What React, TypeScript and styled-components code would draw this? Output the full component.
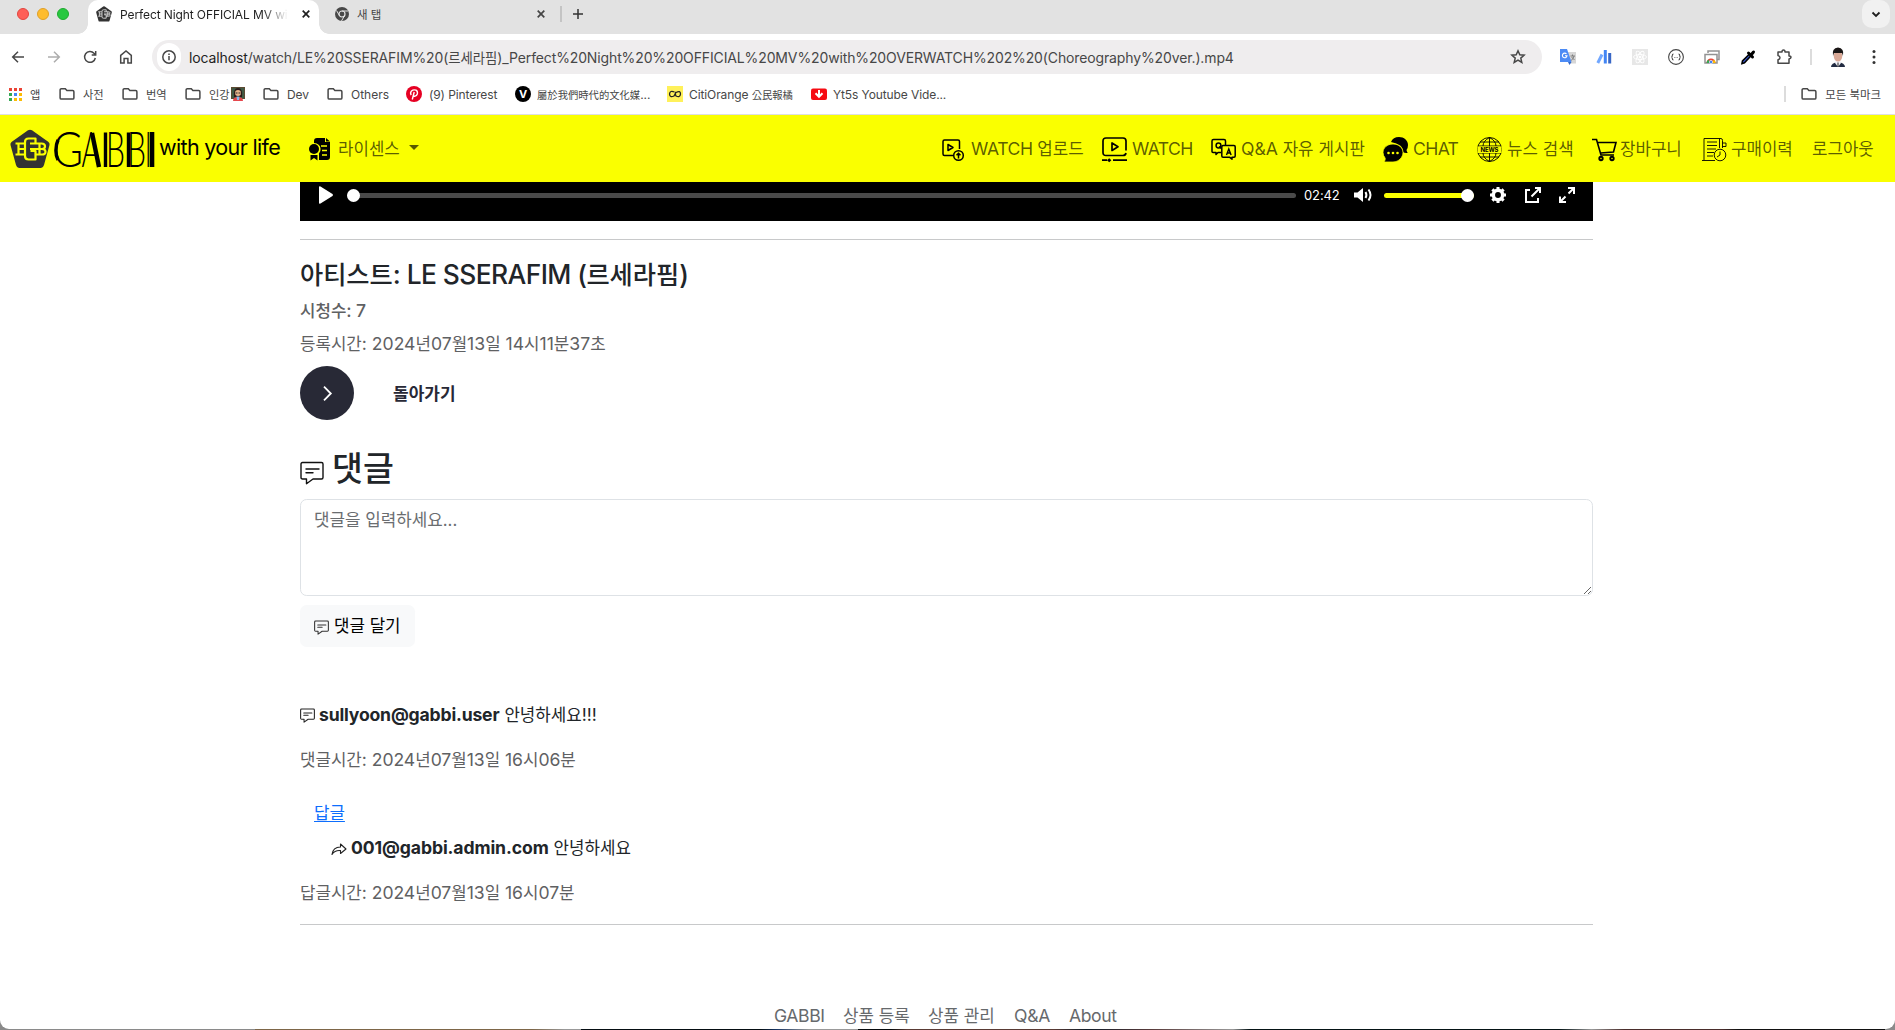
import React from "react";
import styled, { createGlobalStyle } from "styled-components";

const GlobalStyle = createGlobalStyle`
  * { box-sizing: border-box; }
  body {
    margin: 0;
    background: #fff;
    font-family: Inter, "Noto Sans CJK KR", sans-serif;
    font-size: 17.6px;
    color: #212529;
    overflow: hidden;
  }
`;

const Window = styled.div`
  width: 1895px;
  height: 1030px;
  display: flex;
  flex-direction: column;
  background: #8a8a8a;
  overflow: hidden;
`;

const Page = styled.div`
  height: 1029px;
  flex: none;
  display: flex;
  flex-direction: column;
  background: #fff;
  border-radius: 0 0 9px 9px;
  overflow: hidden;
`;

const DesktopEdge = styled.div`
  height: 1px;
  flex: none;
  margin: 0 10px 0 255px;
  background: linear-gradient(90deg, #7d6648 0 17%, #999 19% 20%, #050d12 20% 31%, #173564 32%, #999 34% 37%, #05090c 37% 39%, #593a34 40% 49%, #101c28 51%, #593b3b 55%, #999 60%, #041315 61% 80%, #999 82%, #4a2d2b 84% 90%, #111 91%);
`;

const Glyph = styled.svg.attrs<{ $w?: number; $h?: number }>((p) => ({
  fill: "none",
  stroke: p.stroke ?? "currentColor",
  strokeWidth: p.strokeWidth ?? 1.5,
}))<{ $w?: number; $h?: number }>`
  display: block;
  flex: none;
  width: ${(p) => p.$w ?? 16}px;
  height: ${(p) => p.$h ?? p.$w ?? 16}px;
  overflow: visible;
`;

/* ---------- text ---------- */

const Hangul = styled.span<{ $k: number }>`
  font-size: ${(p) => p.$k}em;
  letter-spacing: 0;
`;

const Label = styled.span<{ $w?: number; $ls?: number }>`
  display: block;
  flex: none;
  width: ${(p) => (p.$w ? `${p.$w}px` : "auto")};
  letter-spacing: ${(p) => p.$ls ?? 0}px;
  white-space: nowrap;
`;

function Mixed({ children, k = 0.955 }: { children: string; k?: number }) {
  return (
    <>
      {children.split(/([\uac00-\ud7a3\u4e00-\u9fff]+)/).map((part, i) =>
        i % 2 ? <Hangul key={i} $k={k}>{part}</Hangul> : part
      )}
    </>
  );
}

/* ---------- tab strip ---------- */

const TabStrip = styled.div`
  height: 34px;
  flex: none;
  display: flex;
  background: #e2e2e2;
  font-size: 12px;
`;

const Lights = styled.div`
  width: 88px;
  height: 28px;
  flex: none;
  display: flex;
  align-items: center;
  gap: 8px;
  padding-left: 17px;
`;

const Light = styled.i<{ $c: string; $b: string }>`
  width: 12px;
  height: 12px;
  border-radius: 50%;
  background: ${(p) => p.$c};
  border: 1px solid ${(p) => p.$b};
`;

const Tab = styled.div<{ $active?: boolean; $w: number }>`
  position: relative;
  width: ${(p) => p.$w}px;
  height: 34px;
  flex: none;
  display: flex;
  align-items: center;
  padding: 0 ${(p) => (p.$active ? 11 : 14)}px 6px 8px;
  color: ${(p) => (p.$active ? "#1f1f1f" : "#454545")};
  background: ${(p) => (p.$active ? "#fff" : "transparent")};
  border-radius: 10px 10px 0 0;
  ${(p) => p.$active && `
    &::before, &::after {
      content: "";
      position: absolute;
      bottom: 0;
      width: 10px;
      height: 10px;
    }
    &::before { left: -10px; background: radial-gradient(circle at 0 0, transparent 9.5px, #fff 10px); }
    &::after { right: -10px; background: radial-gradient(circle at 100% 0, transparent 9.5px, #fff 10px); }
  `}
`;

const TabTitle = styled.span<{ $fade?: boolean }>`
  flex: 1;
  margin: 0 14px 0 8px;
  white-space: nowrap;
  letter-spacing: -0.1px;
  ${(p) => p.$fade && "mask-image: linear-gradient(90deg, #000 85%, transparent);"}
`;

const Divider = styled.i<{ $h: number; $m: string; $c?: string }>`
  width: 2px;
  height: ${(p) => p.$h}px;
  margin: ${(p) => p.$m};
  background: ${(p) => p.$c ?? "#dcdcdc"};
  flex: none;
`;

const TabSearch = styled.div`
  width: 28px;
  height: 28px;
  margin: 0 5px 0 auto;
  border-radius: 10px;
  background: #f1f1f1;
  display: flex;
  align-items: center;
  justify-content: center;
  color: #1f1f1f;
`;

/* ---------- toolbar ---------- */

const Toolbar = styled.div`
  height: 46px;
  flex: none;
  display: flex;
  align-items: center;
  padding: 0 13px 0 10px;
  color: #474747;
`;

const NavButtons = styled.div`
  display: flex;
  gap: 20px;
  width: 142px;
`;

const Omnibox = styled.div`
  width: 1390px;
  height: 34px;
  display: flex;
  align-items: center;
  padding: 0 16px 0 5px;
  border-radius: 17px;
  background: #efedee;
  font-size: 14px;
`;

const InfoCircle = styled.span`
  width: 24px;
  height: 28px;
  border-radius: 14px;
  background: #fff;
  display: flex;
  align-items: center;
  justify-content: center;
  margin-right: 8px;
`;

const Url = styled.span`
  flex: 1;
  letter-spacing: -0.128px;
  color: #474747;
  white-space: nowrap;
  b { font-weight: 400; color: #1f1f1f; }
`;

const Extensions = styled.div`
  display: flex;
  align-items: center;
  gap: 20px;
  margin-left: 18px;
`;

/* ---------- bookmarks ---------- */

const Bookmarks = styled.div`
  height: 34px;
  flex: none;
  display: flex;
  align-items: center;
  padding: 0 14px 6px 9px;
  font-size: 12px;
  color: #474747;
`;

const Bookmark = styled.div<{ $w: number; $gap?: number }>`
  width: ${(p) => p.$w}px;
  flex: none;
  display: flex;
  align-items: center;
  gap: ${(p) => p.$gap ?? 8}px;
`;

const AllBookmarks = styled.div`
  margin-left: auto;
  display: flex;
  align-items: center;
  gap: 8px;
`;

const BrowserLine = styled.div`
  height: 1px;
  flex: none;
  background: #dedfe3;
`;

/* ---------- site navbar ---------- */

const Navbar = styled.nav`
  height: 67px;
  flex: none;
  display: flex;
  align-items: center;
  padding: 0 21px 0 10px;
  background: #faff00;
  color: rgba(0, 0, 0, 0.65);
`;

const Brand = styled.div`
  display: flex;
  align-items: center;
  width: 299px;
  color: #000;
  font-size: 22px;
`;

const Wordmark = styled.span`
  margin: 3px 0 0 4px;
`;

const BrandText = styled.span`
  margin: 0 0 3px 4px;
  font-size: 21.5px;
  letter-spacing: -0.65px;
  white-space: nowrap;
`;

const NavItem = styled.a<{ $gap: number; $ml?: number }>`
  display: flex;
  align-items: center;
  gap: ${(p) => p.$gap}px;
  margin-left: ${(p) => p.$ml ?? 0}px;
  svg { color: #000; margin-top: 2px; }
`;

const NavText = styled(Label)`
  margin-top: -1px;
`;

const Caret = styled.i`
  border: 5px solid transparent;
  border-top-color: rgba(0, 0, 0, 0.65);
  border-bottom: 0;
  margin: -2px 0 0 2px;
`;

const NavRight = styled.div`
  display: flex;
  margin-left: auto;
`;

/* ---------- content ---------- */

const Content = styled.main`
  width: 1293px;
  margin-left: 300px;
  display: flex;
  flex-direction: column;
`;

const Player = styled.div`
  height: 39px;
  flex: none;
  display: flex;
  align-items: center;
  padding: 0 18px 13px 19px;
  background: #000;
  color: #fff;
`;

const Track = styled.div<{ $w: number; $ml: number; $c: string; $end?: boolean }>`
  width: ${(p) => p.$w}px;
  height: 5px;
  margin-left: ${(p) => p.$ml}px;
  display: flex;
  align-items: center;
  justify-content: ${(p) => (p.$end ? "flex-end" : "flex-start")};
  border-radius: 3px;
  background: ${(p) => p.$c};
`;

const Knob = styled.i`
  width: 13px;
  height: 13px;
  flex: none;
  border-radius: 50%;
  background: #fff;
`;

const Time = styled.span`
  width: 50px;
  margin-left: 8px;
  font-size: 13px;
  letter-spacing: -0.1px;
`;

const PlayerIcons = styled.div`
  margin-left: auto;
  display: flex;
  gap: 18.5px;
`;

const Rule = styled.hr`
  width: 100%;
  height: 1px;
  flex: none;
  margin: 18px 0 0;
  border: 0;
  background: #c8c9ca;
`;

const Line = styled.div<{ $mt?: number; $pl?: number; $h?: number }>`
  height: ${(p) => p.$h ?? 28}px;
  flex: none;
  display: flex;
  align-items: center;
  margin-top: ${(p) => p.$mt ?? 0}px;
  padding-left: ${(p) => p.$pl ?? 0}px;
  white-space: pre;
  svg { color: #222; margin-top: 3px; margin-right: 4px; }
`;

const Title = styled.h4`
  height: 40px;
  margin: 14px 0 0;
  line-height: 40px;
  font-size: 26.4px;
  font-weight: 500;
  letter-spacing: -0.58px;
`;

const Meta = styled(Line)<{ $bold?: boolean }>`
  color: #5f6163;
  font-weight: ${(p) => (p.$bold ? 500 : 400)};
`;

const BackButton = styled.button`
  display: flex;
  align-items: center;
  gap: 39px;
  height: 54px;
  margin: 6px 0 0;
  padding: 0;
  border: 0;
  background: none;
  font: 700 17px Inter, "Noto Sans CJK KR", sans-serif;
  color: #282936;
`;

const BackText = styled.span`
  margin-top: -2px;
`;

const BackCircle = styled.span`
  width: 54px;
  height: 54px;
  border-radius: 50%;
  background: #282936;
  color: #fff;
  display: flex;
  align-items: center;
  justify-content: center;
`;

const Heading = styled.h2`
  height: 58px;
  margin: 20px 0 0;
  display: flex;
  align-items: center;
  gap: 8px;
  font-size: 33.6px;
  line-height: 58px;
  font-weight: 500;
  svg { margin-top: 8px; color: #111; }
`;

const Field = styled.textarea`
  width: 100%;
  height: 97px;
  flex: none;
  margin: 1px 0 0;
  padding: 7px 13px;
  border: 1px solid #dee2e6;
  border-radius: 6.6px;
  resize: vertical;
  font: 16.85px/26px Inter, "Noto Sans CJK KR", sans-serif;
  &::placeholder { color: #6a6d70; opacity: 1; }
`;

const Submit = styled.button`
  width: 115px;
  height: 42px;
  flex: none;
  display: flex;
  align-items: center;
  gap: 5px;
  margin: 9px 0 0;
  padding: 0 0 2px 14px;
  border: 0;
  border-radius: 6.6px;
  background: #f8f9fa;
  color: #000;
  font: 16.8px Inter, "Noto Sans CJK KR", sans-serif;
  white-space: nowrap;
  svg { margin-top: 5px; color: #333; }
`;

const Author = styled.b<{ $ls: number }>`
  font-weight: 700;
  margin-right: 5px;
  letter-spacing: ${(p) => p.$ls}px;
`;

const ReplyLink = styled.a`
  color: #0d6efd;
  text-decoration: underline;
  text-underline-offset: 2px;
`;

const Footer = styled.footer`
  height: 28px;
  flex: none;
  display: flex;
  align-items: center;
  margin-top: 76px;
  padding-left: 474px;
  color: #66696c;
`;

/* ---------- drawings ---------- */

const Folder = () => (
  <Glyph $w={16} viewBox="0 0 16 16">
    <path d="M2.3 2.8h4l1.6 1.7h5.8c.7 0 1.2.5 1.2 1.2v6.2c0 .7-.5 1.2-1.2 1.2H2.3c-.7 0-1.2-.5-1.2-1.2V4c0-.7.5-1.2 1.2-1.2z" />
  </Glyph>
);

const Pentagon = ({ size, ink, bg }: { size: number; ink: string; bg: string }) => (
  <Glyph $w={size} viewBox="0 0 40 40">
    <path d="M18 1.3q2-1.2 4 0L38.5 13q1.5 1.3 1 3L34 36q-.8 3-3 3H9q-2.2 0-3-3L.5 16q-.5-1.700 1-3z" fill={ink} stroke="none" />
    <g stroke={bg} strokeWidth="2.200" strokeLinejoin="round">
      <path d="M25.500 14.500V9.500H18.500q-3.500 0-3.500 3.500v14q0 3.500 3.500 3.500h7v-8.500h-5" />
      <path d="M14.500 14.500H5.500M14.500 25.500H5.500M8.500 14.500v11M8.500 20H15" />
      <path d="M20 14.500h11.500q3.500 0 3.500 2.700T32 20q3.500 0 3.500 2.800t-3.500 2.700H25M29.500 14.500v11M20 20h12" />
    </g>
  </Glyph>
);

const GabbiWordmark = () => (
  <Glyph $w={101} $h={36} viewBox="0 0 101 36" aria-label="GABBI">
    <g fill="#000" stroke="none" fontFamily="Lato, sans-serif" fontWeight="300" fontSize="48.500">
      <text transform="translate(-1.500 35) scale(.86 1)">G</text>
      <text transform="translate(27.500 35) scale(.6 1)">A</text>
      <text transform="translate(52 35) scale(.62 1)">B</text>
      <text transform="translate(73 35) scale(.62 1)">B</text>
      <text transform="translate(91 35) scale(.5 1)">I</text>
    </g>
    <g stroke="#000" strokeWidth="3.400">
      <path d="M4 8C1.200 14 1.200 23 4 28" strokeWidth="3.400" />
      <path d="M38 1L45 35" strokeWidth="4.400" />
      <path d="M51.500.5V35M74.500.5V35" />
      <path d="M98 0v35" strokeWidth="4.600" />
    </g>
  </Glyph>
);

const Bubble = ({ size }: { size: number }) => (
  <Glyph $w={size} viewBox="0 0 24 24" strokeWidth={size > 20 ? 1.4 : 1.7}>
    <path d="M2.500 1.500h19q1.500 0 1.500 1.500v13.500q0 1.500-1.500 1.500H13l-6.500 4.700V18h-4Q1 18 1 16.500V3q0-1.500 1.500-1.500zM6 8h13M6 11.700h7" strokeLinejoin="round" strokeLinecap="round" />
  </Glyph>
);

const Cross = () => (
  <Glyph $w={8} viewBox="0 0 8 8"><path d="M.7.7l6.600 6.600M7.300.7L.7 7.300" strokeWidth="1.700" /></Glyph>
);

const License = () => (
  <Glyph $w={22} $h={23} viewBox="0 0 22 23">
    <path d="M5 5V3q0-3 3-3h8v4h5v15q0 3-3 3h-8v-6.500q2-2 1.500-5Q11 5.500 5 5z" fill="currentColor" stroke="none" />
    <path d="M17 0l4 3.500h-4z" fill="currentColor" stroke="none" />
    <circle cx="5" cy="11" r="5" fill="currentColor" stroke="none" />
    <path d="M1.500 17v5.500L5 20l3.500 2.500V17z" fill="currentColor" stroke="none" />
    <path d="M12 8h6M13 12.500h5M13 17h5" stroke="#faff00" strokeWidth="1.500" />
  </Glyph>
);

const Upload = () => (
  <Glyph $w={22} viewBox="0 0 22 22">
    <path d="M11 16.500H2.500Q1 16.500 1 15V2.500Q1 1 2.500 1H16q1.500 0 1.500 1.500V10M6 5.500v6l5-3z" strokeLinejoin="round" />
    <circle cx="16.500" cy="16.500" r="4.800" />
    <path d="M16.500 19.500v-5M14.500 16.300l2-2 2 2" />
  </Glyph>
);

const WatchIcon = () => (
  <Glyph $w={25} viewBox="0 0 25 25">
    <path d="M21 18.500H4Q1 18.500 1 15.500V4q0-3 3-3h17q3 0 3 3v9.500M24 16q-.5 2.500-3 2.500M10 6v7.500l6-3.700zM0 23.200h5M11 23.200h14" strokeLinejoin="round" strokeWidth="1.700" />
    <path d="M5 23.200l2.200-2 2.200 2-2.200 2z" fill="currentColor" stroke="none" />
  </Glyph>
);

const QnaIcon = () => (
  <Glyph $w={25} viewBox="0 0 25 25">
    <path d="M10 15.500H7l-2 2v-2H2Q1 15.500 1 14.500V4q0-1.500 1.500-1.500H13q1.500 0 1.500 1.500v4M12 8.500h11q1.200 0 1.200 1.200V19q0 1.200-1.200 1.200h-2v2l-2.500-2H12q-1.200 0-1.200-1.200V9.700q0-1.200 1.200-1.200z" strokeLinejoin="round" />
    <circle cx="7.500" cy="8.500" r="2.400" />
    <path d="M8 9.500l2 2M15.500 18l2.300-6 2.300 6M16.300 16h3" strokeWidth="1.400" />
  </Glyph>
);

const ChatIcon = () => (
  <Glyph $w={25} viewBox="0 0 25 25">
    <path d="M8 5Q10 0 16 0c5 0 9 3.500 9 8q0 3-1.500 5 .3 1.500 1.200 3-3 .3-4.500-.7Q20 7 8 5z" fill="currentColor" stroke="none" />
    <path d="M10 7c6 0 10 4 10 8.500S16 25 10 25H1q1.500-2 1.200-3.800Q0 18.500 0 15.500C0 11 4 7 10 7z" fill="currentColor" stroke="#faff00" strokeWidth="0.800" />
    <g fill="#faff00" stroke="none"><circle cx="5.500" cy="16" r="1.300" /><circle cx="10" cy="16" r="1.300" /><circle cx="14.500" cy="16" r="1.300" /></g>
  </Glyph>
);

const NewsIcon = () => (
  <Glyph $w={25} viewBox="0 0 25 25" strokeWidth="0.900">
    <circle cx="12.500" cy="12.500" r="12" />
    <path d="M12.500.5v24M12.500.5Q6 4 6 9M12.500.5Q19 4 19 9M6 16q0 5 6.500 8.500Q19 21 19 16M3 5h19M1 9h23M1 16h23M3 20h19" />
    <path d="M.5 9.500h24v6.500H.5z" fill="#faff00" stroke="none" />
    <text x="12.500" y="15" textAnchor="middle" textLength="18" fontSize="6" fontWeight="700" fill="currentColor" stroke="none">NEWS</text>
  </Glyph>
);

const CartIcon = () => (
  <Glyph $w={25} viewBox="0 0 25 25" strokeWidth="1.600">
    <path d="M0 2.500h4.500L9 18h13M5.500 5.500H24L21.500 15 8.500 16" />
    <circle cx="9" cy="21.500" r="1.700" strokeWidth="1.900" /><circle cx="20" cy="21.500" r="1.700" strokeWidth="1.900" />
  </Glyph>
);

const ReceiptIcon = () => (
  <Glyph $w={24} $h={25} viewBox="0 0 24 25" strokeWidth="0.900">
    <path d="M2 23V1.500h17q1.500 0 1.500 2V11M0 23.500h13M17.500 1.500V11M20.500 6H24v3.500h-3.500M5 5h10M5 8.500h10M5 12h9M5 15.500h7M5 19h6" />
    <circle cx="18" cy="18" r="5.800" /><path d="M18 14.500V18l-3 2" />
  </Glyph>
);

const ShareArrow = () => (
  <Glyph $w={16} viewBox="0 0 16 16" strokeWidth="1.100">
    <path d="M1 13.500Q2 6 9.500 6V3L15 8l-5.500 4.500V9.600Q4 9 1 13.500z" strokeLinejoin="round" />
  </Glyph>
);

const Items: { icon: React.ReactNode; text: string; gap: number; w: number; ml: number; ls?: number }[] = [
  { icon: <Upload />, text: "WATCH 업로드", gap: 7, w: 112, ml: 0, ls: -0.4 },
  { icon: <WatchIcon />, text: "WATCH", gap: 5, w: 61, ml: 19, ls: -0.6 },
  { icon: <QnaIcon />, text: "Q&A 자유 게시판", gap: 5, w: 124, ml: 18, ls: -0.05 },
  { icon: <ChatIcon />, text: "CHAT", gap: 5, w: 46, ml: 18, ls: -0.65 },
  { icon: <NewsIcon />, text: "뉴스 검색", gap: 5, w: 67, ml: 18 },
  { icon: <CartIcon />, text: "장바구니", gap: 3, w: 62, ml: 18 },
  { icon: <ReceiptIcon />, text: "구매이력", gap: 5, w: 62, ml: 20 },
];

export default function App() {
  return (
    <Window>
      <GlobalStyle />
      <Page>
        <TabStrip>
          <Lights>
            <Light $c="#fe5f57" $b="#e2463f" /><Light $c="#febc2e" $b="#e0a028" /><Light $c="#28c840" $b="#1fab2f" />
          </Lights>
          <Tab $active $w={231}>
            <Pentagon size={16} ink="#333" bg="#ddd" />
            <TabTitle $fade>Perfect Night OFFICIAL MV wi</TabTitle>
            <Cross />
          </Tab>
          <Tab $w={240}>
            <Glyph $w={14} viewBox="0 0 14 14" style={{ marginLeft: 8 }}>
              <circle cx="7" cy="7" r="7" fill="#474747" stroke="none" />
              <circle cx="7" cy="7" r="3" stroke="#e2e2e2" strokeWidth="1.200" />
              <path d="M7 4h6M4.400 8.500L1.500 3.500M9.600 8.500L6.500 14" stroke="#e2e2e2" strokeWidth="1" />
            </Glyph>
            <TabTitle><Mixed>새 탭</Mixed></TabTitle>
            <Cross />
          </Tab>
          <Divider $h={16} $m="6px 11px 0 1px" $c="#c4c4c4" />
          <Glyph $w={10} viewBox="0 0 10 10" style={{ marginTop: 9 }}><path d="M5 0v10M0 5h10" stroke="#333" /></Glyph>
          <TabSearch>
            <Glyph $w={8} $h={5} viewBox="0 0 8 5"><path d="M.5.5L4 4 7.500.5" strokeWidth="1.800" /></Glyph>
          </TabSearch>
        </TabStrip>

        <Toolbar>
          <NavButtons>
            <Glyph viewBox="0 0 16 16"><path d="M14 8H3M8 2.700L2.700 8 8 13.300" /></Glyph>
            <Glyph viewBox="0 0 16 16" opacity="0.450"><path d="M2 8h11M8 2.700L13.300 8 8 13.300" /></Glyph>
            <Glyph viewBox="0 0 16 16"><path d="M13.300 9A5.400 5.400 0 1 1 12 4.300l1.500 1.500M13.700 2v4h-4" /></Glyph>
            <Glyph viewBox="0 0 16 16"><path d="M2.700 6.300L8 2l5.300 4.300V14H9.900V9.500H6.100V14H2.700z" /></Glyph>
          </NavButtons>
          <Omnibox>
            <InfoCircle>
              <Glyph $w={14} viewBox="0 0 14 14"><circle cx="7" cy="7" r="6.200" /><path d="M7 6v4.300M7 3.500v1.500" /></Glyph>
            </InfoCircle>
            <Url>
              <b>localhost</b>
              <Mixed>/watch/LE%20SSERAFIM%20(르세라핌)_Perfect%20Night%20%20OFFICIAL%20MV%20with%20OVERWATCH%202%20(Choreography%20ver.).mp4</Mixed>
            </Url>
            <Glyph viewBox="0 0 16 16"><path d="M8 1.800l1.800 4 4.300.4-3.300 2.900 1 4.300L8 11.200l-3.800 2.200 1-4.300L1.900 6.200l4.300-.4z" /></Glyph>
          </Omnibox>
          <Extensions>
            <Glyph viewBox="0 0 16 16" stroke="none">
              <path d="M6 3h10v11.500H9z" fill="#d6d6d6" /><path d="M0 0h7l4.500 13H0z" fill="#4c8bf5" /><path d="M8 13h3.500L9.500 16z" fill="#3367c8" />
              <path d="M6.500 5A2.300 2.300 0 1 0 7 6.700H5" stroke="#fff" strokeWidth="1.100" />
              <path d="M10.500 7h4.500M12.500 5.500V7M14 7q-.5 3-3 4.500M11.500 8l3 3" stroke="#777" strokeWidth="0.900" />
            </Glyph>
            <Glyph viewBox="0 0 16 16" strokeWidth="3"><path d="M1.800 14L6 5.500" stroke="#71a7ff" /><path d="M9.300 1v13.500" stroke="#4285f4" /><path d="M13.700 4v10.500" stroke="#3867c6" /></Glyph>
            <Glyph viewBox="0 0 16 16" strokeWidth="0.900">
              <path d="M0 0h16v16H0z" fill="#e7e7e7" stroke="none" />
              <g stroke="#fff"><ellipse cx="8" cy="8" rx="6.500" ry="2.500" /><ellipse cx="8" cy="8" rx="6.500" ry="2.500" transform="rotate(60 8 8)" /><ellipse cx="8" cy="8" rx="6.500" ry="2.500" transform="rotate(120 8 8)" /><circle cx="8" cy="8" r="1" fill="#fff" /></g>
            </Glyph>
            <Glyph viewBox="0 0 16 16" strokeWidth="1.100"><circle cx="8" cy="8" r="7.400" /><path d="M5.500 5Q4.300 5 4.300 6.500 4.300 8 3.300 8q1 0 1 1.500T5.500 11M10.500 5q1.200 0 1.200 1.500 0 1.500 1 1.500-1 0-1 1.500T10.500 11M6.500 8.500h.8M8.700 8.500h.8" /></Glyph>
            <Glyph viewBox="0 0 16 16">
              <path d="M4 4V2h11v8.500h-2M1 5.500h12V14H1z" stroke="#929292" />
              <path d="M2.500 14a4.500 4.500 0 0 1 9 0z" fill="#ea4335" stroke="none" /><path d="M2.500 14q0-2.500 2-3.600L6 14z" fill="#34a853" stroke="none" /><path d="M11.500 14q0-2-1.500-3.400L8 14z" fill="#fbbc04" stroke="none" /><circle cx="7" cy="13" r="1.700" fill="#4285f4" stroke="#fff" strokeWidth="0.600" />
            </Glyph>
            <Glyph viewBox="0 0 16 16"><path d="M9.500 5L2.500 12 2 14.500l2.500-.8 6.500-7" fill="#3c5de0" stroke="#000" strokeWidth="1.600" /><path d="M8.500 4l4 4M11 6l2.500-3" stroke="#000" strokeWidth="3" strokeLinecap="round" /></Glyph>
            <Glyph viewBox="0 0 16 16"><path d="M2 3h4q0-2 1.500-2T9 3h4v4q2 0 2 1.300T13 10v4.200H2v-3.400q2-.3 2-2T2 6.500z" strokeLinejoin="round" /></Glyph>
          </Extensions>
          <Divider $h={16} $m="0 18px 0 18px" />
          <Glyph $w={16} $h={20} viewBox="0 0 16 20">
            <path d="M1 20q0-4 7-5 7 1 7 5z" fill="#222b42" stroke="none" /><path d="M6 13h4l1 3-3 4-3-4z" fill="#f4f4fa" stroke="none" />
            <ellipse cx="8" cy="9" rx="4.300" ry="5.500" fill="#d9a896" stroke="none" /><path d="M3 9Q1.500 1 8 .5 14.500 1 13 9l-1-3H4z" fill="#191515" stroke="none" /><path d="M8 15.500V20" stroke="#222" strokeWidth="1" />
          </Glyph>
          <Glyph $w={16} viewBox="0 0 16 16" style={{ marginLeft: "auto" }}>
            <g fill="#333" stroke="none"><circle cx="8" cy="2.500" r="1.500" /><circle cx="8" cy="8" r="1.500" /><circle cx="8" cy="13.500" r="1.500" /></g>
          </Glyph>
        </Toolbar>

        <Bookmarks>
          <Bookmark $w={50}>
            <Glyph $w={13} viewBox="0 0 13 13">
              {["#ea4335", "#ea4335", "#ea4335", "#34a853", "#4285f4", "#fbbc04", "#34a853", "#fbbc04", "#fbbc04"].map((c, i) => (
                <rect key={i} x={(i % 3) * 5} y={Math.floor(i / 3) * 5} width="3" height="3" fill={c} stroke="none" />
              ))}
            </Glyph>
            <Label><Mixed k={0.94}>앱</Mixed></Label>
          </Bookmark>
          <Bookmark $w={63}><Folder /><Label><Mixed k={0.94}>사전</Mixed></Label></Bookmark>
          <Bookmark $w={63}><Folder /><Label><Mixed k={0.94}>번역</Mixed></Label></Bookmark>
          <Bookmark $w={78}>
            <Folder />
            <Bookmark $w={36} $gap={1}>
              <Label><Mixed k={0.94}>인강</Mixed></Label>
              <Glyph $w={14} viewBox="0 0 14 14">
                <path d="M0 0h14v12H0z" fill="#5c4a32" stroke="none" /><path d="M1 1h12v10H1z" fill="#3f5a44" stroke="none" />
                <path d="M3 10Q2 1 7 1t4 9z" fill="#2b1a18" stroke="none" /><circle cx="7" cy="6" r="3" fill="#e8b48c" stroke="none" /><path d="M2 14q0-4 5-4t5 4z" fill="#e5484d" stroke="none" /><path d="M5.500 9.500h3L8 13H6z" fill="#87b9ea" stroke="none" />
                <path d="M4.500 6h2M7.500 6h2" stroke="#222" strokeWidth="1" />
              </Glyph>
            </Bookmark>
          </Bookmark>
          <Bookmark $w={64}><Folder /><Label $ls={-0.1}>Dev</Label></Bookmark>
          <Bookmark $w={79}><Folder /><Label>Others</Label></Bookmark>
          <Bookmark $w={109} $gap={7}>
            <Glyph viewBox="0 0 16 16">
              <circle cx="8" cy="8" r="8" fill="#e60023" stroke="none" />
              <path d="M6.300 13.500L8.200 6M5.200 9Q3.800 6.800 5.500 5 7.500 3.200 10 4.200q2 1.200 1.300 3.800-.8 2.300-2.500 2.300-1.100 0-1.400-1" stroke="#fff" strokeWidth="1.400" />
            </Glyph>
            <Label $ls={-0.1}>(9) Pinterest</Label>
          </Bookmark>
          <Bookmark $w={152} $gap={6}>
            <Glyph viewBox="0 0 16 16"><circle cx="8" cy="8" r="8" fill="#000" stroke="none" /><text x="8" y="12" textAnchor="middle" fontSize="11" fontWeight="700" fill="#fff" stroke="none">V</text></Glyph>
            <Label><Mixed k={0.86}>屬於我們時代的文化媒...</Mixed></Label>
          </Bookmark>
          <Bookmark $w={144} $gap={6}>
            <Glyph viewBox="0 0 16 16"><path d="M0 0h16v16H0z" fill="#fff15a" stroke="none" /><path d="M7.500 6Q3 4 2.500 8q.3 4 4.500 2l2-3.500Q13.500 4 13.500 8q-.5 4-4.500 2Q7.500 7 9 6" stroke="#222" strokeWidth="1.300" /></Glyph>
            <Label $ls={-0.1}><Mixed k={0.86}>CitiOrange 公民報橘</Mixed></Label>
          </Bookmark>
          <Bookmark $w={140} $gap={6}>
            <Glyph viewBox="0 0 16 16"><path d="M2 2.500h12q2 0 2 2v7.500q0 2-2 2H2q-2 0-2-2V4.500q0-2 2-2z" fill="#f60b12" stroke="none" /><path d="M8 4v6M4.500 7.300L8 10.800l3.500-3.500" stroke="#fff" strokeWidth="2" /></Glyph>
            <Label $ls={-0.1}>Yt5s Youtube Vide...</Label>
          </Bookmark>
          <AllBookmarks>
            <Divider $h={16} $m="0 7px 0 0" />
            <Folder />
            <Label><Mixed k={0.95}>모든 북마크</Mixed></Label>
          </AllBookmarks>
        </Bookmarks>
        <BrowserLine />

        <Navbar>
          <Brand>
            <Pentagon size={40} ink="#333" bg="#faff00" />
            <Wordmark><GabbiWordmark /></Wordmark>
            <BrandText>with your life</BrandText>
          </Brand>
          <NavItem $gap={7}>
            <License />
            <NavText $w={62}><Mixed>라이센스</Mixed></NavText>
            <Caret />
          </NavItem>
          <NavRight>
            {Items.map((it) => (
              <NavItem key={it.text} $gap={it.gap} $ml={it.ml}>
                {it.icon}
                <NavText $w={it.w} $ls={it.ls}><Mixed>{it.text}</Mixed></NavText>
              </NavItem>
            ))}
            <NavItem $gap={0} $ml={19}><NavText $w={62}><Mixed>로그아웃</Mixed></NavText></NavItem>
          </NavRight>
        </Navbar>

        <Content>
          <Player>
            <Glyph $w={14} $h={18} viewBox="0 0 14 18"><path d="M0 1q0-1 1.500-.5L13.500 8q1 1 0 2L1.500 17.500Q0 18 0 17z" fill="#fff" stroke="none" /></Glyph>
            <Track $w={949} $ml={14} $c="#4a4a4a"><Knob /></Track>
            <Time>02:42</Time>
            <Glyph $w={18} $h={14} viewBox="0 0 18 14">
              <path d="M0 4.500h3.500L9 0v14L3.500 9.500H0z" fill="#fff" stroke="none" />
              <path d="M11.500 4q1.800 3 0 6M14.500 1.500q4 5.500 0 11" strokeWidth="2" />
            </Glyph>
            <Track $w={90} $ml={12} $c="#faff00" $end><Knob /></Track>
            <PlayerIcons>
              <Glyph viewBox="0 0 16 16">
                <circle cx="8" cy="8" r="4.700" strokeWidth="3.500" />
                <path d="M8 0v3M8 13v3M0 8h3M13 8h3M2.400 2.400l2 2M11.600 11.600l2 2M2.400 13.600l2-2M11.600 4.400l2-2" strokeWidth="3" />
              </Glyph>
              <Glyph viewBox="0 0 16 16"><path d="M5 3H1v12h12v-4M6.500 9.500L14 2M10 1h5v5" strokeWidth="2" /></Glyph>
              <Glyph viewBox="0 0 16 16"><path d="M9.500 6.500L14 2M9 1h6v6M6.500 9.500L2 14M1 9.500V15h6" strokeWidth="2" /></Glyph>
            </PlayerIcons>
          </Player>
          <Rule />
          <Title><Mixed k={0.955}>아티스트: LE SSERAFIM (르세라핌)</Mixed></Title>
          <Meta $bold $h={32}><Label $ls={-0.2}><Mixed>시청수: 7</Mixed></Label></Meta>
          <Meta $h={34}><Label><Mixed>등록시간: 2024년07월13일 14시11분37초</Mixed></Label></Meta>
          <BackButton>
            <BackCircle>
              <Glyph $w={9} $h={15} viewBox="0 0 9 15"><path d="M1 .7l6.800 6.800L1 14.300" strokeWidth="1.800" /></Glyph>
            </BackCircle>
            <BackText>돌아가기</BackText>
          </BackButton>
          <Heading><Bubble size={24} />댓글</Heading>
          <Field placeholder="댓글을 입력하세요..." />
          <Submit><Bubble size={15} />댓글 달기</Submit>

          <Line $mt={53}>
            <Bubble size={15} />
            <Author $ls={-0.18}>sullyoon@gabbi.user</Author>
            <Label><Mixed>안녕하세요!!!</Mixed></Label>
          </Line>
          <Meta $mt={17}><Label $ls={-0.05}><Mixed>댓글시간: 2024년07월13일 16시06분</Mixed></Label></Meta>
          <Line $mt={25} $pl={14}><ReplyLink href="#"><Mixed>답글</Mixed></ReplyLink></Line>
          <Line $mt={7} $pl={31}>
            <ShareArrow />
            <Author $ls={-0.1}>001@gabbi.admin.com</Author>
            <Label><Mixed>안녕하세요</Mixed></Label>
          </Line>
          <Meta $mt={17}><Label $ls={-0.05}><Mixed>답글시간: 2024년07월13일 16시07분</Mixed></Label></Meta>
          <Rule />
          <Footer>
            <Label $w={69} $ls={-0.4}>GABBI</Label>
            <Label $w={85}><Mixed>상품 등록</Mixed></Label>
            <Label $w={86}><Mixed>상품 관리</Mixed></Label>
            <Label $w={55} $ls={-0.3}>Q&A</Label>
            <Label $ls={-0.4}>About</Label>
          </Footer>
        </Content>
      </Page>
      <DesktopEdge />
    </Window>
  );
}
